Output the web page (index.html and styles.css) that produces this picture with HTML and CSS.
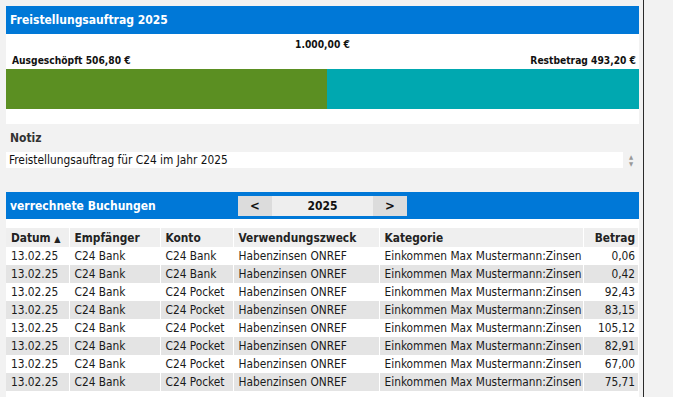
FILE: index.html
```html
<!DOCTYPE html>
<html lang="de">
<head>
    <meta charset="UTF-8">
    <meta name="viewport" content="width=device-width, initial-scale=1.0"/>
    <title>Freistellungsauftrag</title>
    <link rel="stylesheet" href="styles.css">
</head>
<body>
<div class="page">
    <!--Freistellungsauftrag-->
    <div class="bar-title">Freistellungsauftrag 2025</div>
    <div class="quota">
        <div class="quota-total">1.000,00 €</div>
        <div class="quota-labels">
            <span>Ausgeschöpft 506,80 €</span>
            <span>Restbetrag 493,20 €</span>
        </div>
        <div class="quota-bar">
            <div class="used" style="width: 50.68%"></div>
            <div class="rest"></div>
        </div>
    </div>

    <!--Notiz-->
    <div class="note-label">Notiz</div>
    <div class="note">
        <div class="note-text">Freistellungsauftrag für C24 im Jahr 2025</div>
        <div class="spin"><span>▲</span><span>▼</span></div>
    </div>

    <!--Buchungen-->
    <div class="bar-title bookings-title">
        <span>verrechnete Buchungen</span>
        <div class="year-nav">
            <button class="nav-btn">&lt;</button>
            <span class="year">2025</span>
            <button class="nav-btn">&gt;</button>
        </div>
    </div>
    <div class="table-wrap">
        <table class="bookings">
            <colgroup>
                <col class="c-date"><col class="c-payee"><col class="c-acc"><col class="c-purpose"><col class="c-cat"><col class="c-amount">
            </colgroup>
            <thead>
                <tr><th>Datum <span class="sort">▲</span></th><th>Empfänger</th><th>Konto</th><th>Verwendungszweck</th><th>Kategorie</th><th class="num">Betrag</th></tr>
            </thead>
            <tbody>
                <tr><td>13.02.25</td><td>C24 Bank</td><td>C24 Bank</td><td>Habenzinsen ONREF</td><td>Einkommen Max Mustermann:Zinsen</td><td class="num">0,06</td></tr>
                <tr><td>13.02.25</td><td>C24 Bank</td><td>C24 Bank</td><td>Habenzinsen ONREF</td><td>Einkommen Max Mustermann:Zinsen</td><td class="num">0,42</td></tr>
                <tr><td>13.02.25</td><td>C24 Bank</td><td>C24 Pocket</td><td>Habenzinsen ONREF</td><td>Einkommen Max Mustermann:Zinsen</td><td class="num">92,43</td></tr>
                <tr><td>13.02.25</td><td>C24 Bank</td><td>C24 Pocket</td><td>Habenzinsen ONREF</td><td>Einkommen Max Mustermann:Zinsen</td><td class="num">83,15</td></tr>
                <tr><td>13.02.25</td><td>C24 Bank</td><td>C24 Pocket</td><td>Habenzinsen ONREF</td><td>Einkommen Max Mustermann:Zinsen</td><td class="num">105,12</td></tr>
                <tr><td>13.02.25</td><td>C24 Bank</td><td>C24 Pocket</td><td>Habenzinsen ONREF</td><td>Einkommen Max Mustermann:Zinsen</td><td class="num">82,91</td></tr>
                <tr><td>13.02.25</td><td>C24 Bank</td><td>C24 Pocket</td><td>Habenzinsen ONREF</td><td>Einkommen Max Mustermann:Zinsen</td><td class="num">67,00</td></tr>
                <tr><td>13.02.25</td><td>C24 Bank</td><td>C24 Pocket</td><td>Habenzinsen ONREF</td><td>Einkommen Max Mustermann:Zinsen</td><td class="num">75,71</td></tr>
            </tbody>
        </table>
    </div>
</div>
</body>
</html>
```

FILE: styles.css
```css
* {
  font-family: "DejaVu Sans Condensed", "DejaVu Sans", sans-serif;
  box-sizing: border-box;
}
body {
  margin: 0;
  background: #f2f2f2;
  overflow: hidden;
}
.page {
  display: flex;
  flex-direction: column;
  width: 644px;
  height: 397px;
  padding: 6px 4px 0 6px;
  border-right: 1px solid #2b2b2b;
}
.bar-title {
  flex: none;
  height: 28px;
  background: #0078d7;
  color: #fff;
  font-weight: bold;
  font-size: 12px;
  line-height: 28px;
  padding-left: 4px;
}
.quota {
  flex: none;
  background: #fff;
  height: 90px;
  padding-top: 4px;
}
.quota-total, .quota-labels {
  font-size: 10.2px;
  font-weight: bold;
  color: #111;
  line-height: 14px;
}
.quota-total { text-align: center; }
.quota-labels {
  display: flex;
  justify-content: space-between;
  padding: 2px 3px 0 6px;
  margin-bottom: 1px;
}
.quota-bar {
  display: flex;
  height: 40px;
}
.quota-bar .used { background: #5b8f22; }
.quota-bar .rest { flex: 1; background: #00a8b0; }

.note-label {
  margin-top: 7px;
  padding-left: 4px;
  font-size: 12px;
  font-weight: bold;
  color: #333;
  line-height: 14px;
}
.note {
  flex: none;
  display: flex;
  margin-top: 7px;
  height: 16px;
}
.note-text {
  flex: 1;
  background: #fff;
  font-size: 11.8px;
  line-height: 16px;
  padding-left: 3px;
  color: #111;
}
.spin {
  width: 16px;
  display: flex;
  flex-direction: column;
  align-items: center;
  font-size: 6px;
  line-height: 7px;
  color: #999;
  padding-top: 1px;
}

.bookings-title {
  margin-top: 24px;
  height: 27px;
  display: flex;
  align-items: center;
  line-height: normal;
}
.bookings-title > span { width: 228px; }
.year-nav {
  display: flex;
  height: 20px;
}
.nav-btn {
  width: 34px;
  border: 0;
  padding: 0;
  background: #dcdcdc;
  font-weight: bold;
  font-size: 13px;
  color: #111;
}
.year {
  width: 101px;
  background: #eeeeee;
  color: #111;
  text-align: center;
  font-weight: bold;
  font-size: 12px;
  line-height: 20px;
}

.table-wrap {
  flex: 1;
  background: #fff;
  padding-top: 9px;
  overflow: hidden;
}
.bookings {
  width: 100%;
  border-collapse: collapse;
  table-layout: fixed;
  font-size: 11.8px;
}
.c-date { width: 63px; }
.c-payee { width: 91px; }
.c-acc { width: 73px; }
.c-purpose { width: 146px; }
.c-cat { width: 204px; }
.bookings th, .bookings td {
  height: 18px;
  padding: 0 3px 0 5px;
  text-align: left;
  white-space: nowrap;
  overflow: hidden;
  border-right: 1px solid #fff;
  color: #1a1a1a;
}
.bookings th {
  height: 19px;
  background: #efefef;
  font-weight: bold;
  color: #222;
}
.bookings .sort { font-size: 9px; }
.bookings tbody tr:nth-child(even) td { background: #e4e4e4; }
.bookings .num { text-align: right; }
```
